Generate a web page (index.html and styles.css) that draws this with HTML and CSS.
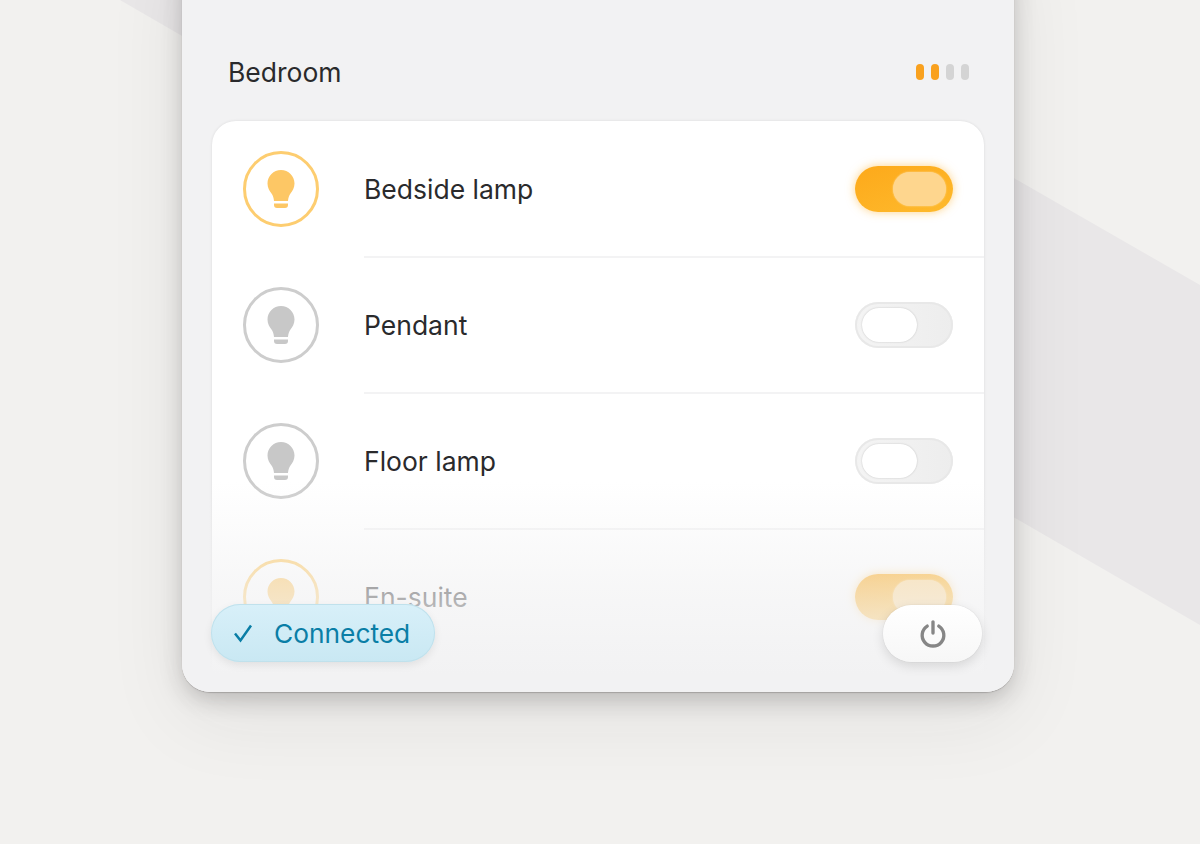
FILE: index.html
```html
<!DOCTYPE html>
<html lang="en">
<head>
<meta charset="utf-8">
<title>Bedroom lights</title>
<link rel="stylesheet" href="styles.css">
</head>
<body>
<svg width="0" height="0" class="defs" aria-hidden="true">
  <symbol id="bulb" viewBox="0 0 30 40">
    <path d="M15 1C7.5 1 1.5 7 1.5 14.5C1.5 19 3.6 22 5.5 24.5C6.9 26.3 7.7 29 8 32H22C22.3 29 23.1 26.3 24.5 24.5C26.4 22 28.5 19 28.5 14.5C28.5 7 22.5 1 15 1Z"/>
    <path d="M8 34.5H22V36A3 3 0 0 1 19 39H11A3 3 0 0 1 8 36Z"/>
  </symbol>
</svg>
<div class="band"></div>
<main class="stage">
  <section class="card">
    <header class="head">
      <h1 class="title">Bedroom</h1>
      <div class="dots"><i class="dot on"></i><i class="dot on"></i><i class="dot"></i><i class="dot"></i></div>
    </header>
    <ul class="list">
      <li class="row">
        <span class="lamp lit"><svg class="bulb"><use href="#bulb"/></svg></span>
        <span class="name">Bedside lamp</span>
        <span class="toggle active"><span class="thumb"></span></span>
      </li>
      <li class="row">
        <span class="lamp"><svg class="bulb"><use href="#bulb"/></svg></span>
        <span class="name">Pendant</span>
        <span class="toggle"><span class="thumb"></span></span>
      </li>
      <li class="row">
        <span class="lamp"><svg class="bulb"><use href="#bulb"/></svg></span>
        <span class="name">Floor lamp</span>
        <span class="toggle"><span class="thumb"></span></span>
      </li>
      <li class="row">
        <span class="lamp lit"><svg class="bulb"><use href="#bulb"/></svg></span>
        <span class="name">En-suite</span>
        <span class="toggle active"><span class="thumb"></span></span>
      </li>
    </ul>
    <div class="fade"></div>
    <div class="status">
      <svg class="check" viewBox="0 0 20 20"><path d="M2 10.5L7.5 17.5L18 2.5"/></svg>
      <span>Connected</span>
    </div>
    <button class="power" type="button" aria-label="Power">
      <svg viewBox="0 0 30 30"><path d="M8.8 6.5A11.6 11.6 0 1 0 21.2 6.5"/><path d="M15 2V14"/></svg>
    </button>
  </section>
</main>
</body>
</html>
```
FILE: styles.css
```css
* { box-sizing: border-box; }
html, body { height: 100%; }
body {
  margin: 0;
  background: #f2f1ef;
  font-family: Inter, "Liberation Sans", sans-serif;
  color: #2a2a2c;
  overflow: hidden;
  position: relative;
}
.defs { position: absolute; }
.band {
  position: absolute;
  inset: 0;
  background: #e9e7e8;
  clip-path: polygon(704px 0, 1200px 285px, 1200px 625px, 120px 0);
}
.stage {
  position: relative;
  height: 844px;
  display: flex;
  align-items: flex-end;
  padding: 0 186px 152px 182px;
}
.card {
  position: relative;
  width: 832px;
  height: 760px;
  flex: none;
  background: #f2f2f3;
  border-radius: 28px;
  overflow: hidden;
  padding: 0 30px;
}
.stage::before {
  content: "";
  position: absolute;
  left: 182px;
  bottom: 152px;
  width: 832px;
  height: 760px;
  border-radius: 28px;
  box-shadow: 0 1px 1px rgba(40,36,36,.22), 0 8px 22px rgba(40,36,36,.22), 0 24px 80px rgba(40,36,36,.08);
}
.head {
  height: 189px;
  padding: 0 15px 33px 16px;
  display: flex;
  align-items: flex-end;
  justify-content: space-between;
}
.title {
  margin: 0;
  font-size: 26.5px;
  font-weight: 400;
  line-height: 32px;
}
.dots {
  display: flex;
  gap: 7px;
  padding-bottom: 8px;
}
.dot {
  width: 8px;
  height: 16px;
  border-radius: 4px;
  background: #d4d4d4;
}
.dot.on { background: #f9a11e; }
.list {
  list-style: none;
  margin: 0;
  padding: 0;
  background: #fff;
  border-radius: 24px 24px 0 0;
  box-shadow: 0 0 3px rgba(0,0,0,.1);
  height: 560px;
}
.row {
  position: relative;
  height: 136px;
  display: flex;
  align-items: center;
  padding: 0 31px;
}
.row + .row::before {
  content: "";
  position: absolute;
  left: 152px;
  right: 0;
  top: -1px;
  height: 2px;
  background: #f3f3f4;
}
.lamp {
  width: 76px;
  height: 76px;
  flex: none;
  border-radius: 50%;
  border: 3px solid #cdcdcd;
  display: flex;
  align-items: center;
  justify-content: center;
  color: #c8c8c8;
}
.lamp.lit { border-color: #fdcd70; color: #fdc765; }
.bulb {
  width: 30px;
  height: 40px;
  fill: currentColor;
}
.name {
  margin-left: 45px;
  flex: 1;
  font-size: 26.5px;
  line-height: 32px;
}
.toggle {
  width: 98px;
  height: 46px;
  flex: none;
  border-radius: 23px;
  background: linear-gradient(90deg, #f4f4f4, #ededed);
  box-shadow: inset 0 0 0 2px #e8e8e8;
  padding: 6px 7px;
  display: flex;
}
.thumb {
  width: 55px;
  height: 34px;
  border-radius: 17px;
  background: #fff;
  box-shadow: 0 0 2px rgba(0,0,0,.2);
}
.toggle.active {
  background: linear-gradient(160deg, #fda91a, #feba2d);
  box-shadow: 0 0 10px rgba(253,175,40,.55);
  justify-content: flex-end;
}
.active .thumb {
  width: 53px;
  background: #fed68e;
  box-shadow: 0 0 2px rgba(255,240,210,.7);
}
.fade {
  position: absolute;
  left: 0;
  right: 0;
  bottom: 0;
  height: 210px;
  background: linear-gradient(180deg, rgba(242,242,243,0), rgba(242,242,243,.6) 48%, #f2f2f3 92%);
}
.status {
  position: absolute;
  left: 29px;
  bottom: 30px;
  width: 224px;
  height: 58px;
  border-radius: 29px;
  display: flex;
  align-items: center;
  gap: 21px;
  padding-left: 22px;
  background: linear-gradient(180deg, #d8f0f9, #c9e8f3);
  box-shadow: inset 0 0 0 1px #c0e1ec, 0 3px 8px rgba(0,0,0,.08);
  color: #0a7ea6;
  font-size: 26.3px;
}
.check {
  width: 20px;
  height: 20px;
  fill: none;
  stroke: currentColor;
  stroke-width: 2.5;
}
.power {
  position: absolute;
  right: 32px;
  bottom: 30px;
  width: 99px;
  height: 57px;
  border: 0;
  padding: 0;
  border-radius: 29px;
  background: linear-gradient(180deg, #fff, #f7f7f7);
  box-shadow: 0 0 1px rgba(0,0,0,.2), 0 4px 12px rgba(0,0,0,.12);
  display: flex;
  align-items: center;
  justify-content: center;
}
.power svg {
  width: 28px;
  height: 28px;
  fill: none;
  stroke: #868686;
  stroke-width: 3.6;
  stroke-linecap: round;
}
```
